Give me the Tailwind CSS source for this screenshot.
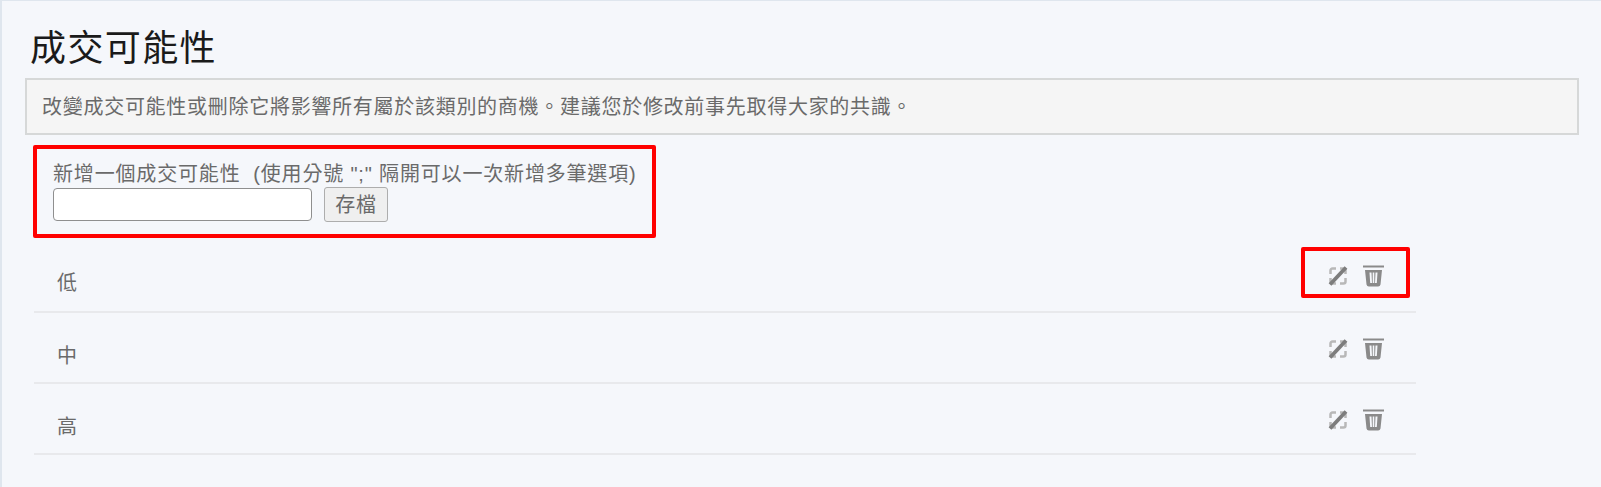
<!DOCTYPE html>
<html lang="zh-Hant">
<head>
  <meta charset="UTF-8">
  <script src="https://cdn.jsdelivr.net/npm/@tailwindcss/browser@4"></script>
  <title>成交可能性</title>
</head>
<body class="bg-[#f5f7fb] font-['Liberation_Sans','Noto_Sans_CJK_TC',sans-serif] text-[#6a6a6a]">
  <div class="h-[487px] overflow-hidden border-l-2 border-t border-[#dfe6ee] pl-[23px] pr-[22px]">
    <!-- title -->
    <h1 class="h-[77px] pt-[27px] pl-[5px] text-[36px] leading-[42px] tracking-[1.4px] text-[#1a1a1a]">成交可能性</h1>

    <!-- notice -->
    <div class="flex h-[57px] items-center border-2 border-[#d6d8d8] bg-[#f5f5f5] pl-[15px] text-[20px] tracking-[0.72px]">
      改變成交可能性或刪除它將影響所有屬於該類別的商機。建議您於修改前事先取得大家的共識。
    </div>

    <!-- add form -->
    <form class="mt-[10px] ml-[8px] h-[93px] w-[623px] rounded-[2px] border-[4px] border-[#ff0000] pt-[10px] pl-[16px]">
      <label class="block h-[28px] text-[20px] leading-[30px] tracking-[0.83px] whitespace-pre">新增一個成交可能性  (使用分號 ";" 隔開可以一次新增多筆選項)</label>
      <div class="flex items-center gap-[12px]">
        <input type="text" class="h-[33px] w-[259px] rounded-[4px] border border-[#8f8f8f] bg-white">
        <button type="button" class="h-[35px] w-[64px] rounded-[3px] border border-[#adadad] bg-[#efefef] text-[20px] tracking-[0.7px] text-[#6a6a6a]">存檔</button>
      </div>
    </form>

    <!-- list -->
    <div class="ml-[9px] w-[1382px]">
      <div class="relative flex h-[75px] items-start justify-between border-b-2 border-[#e8e9ec] pl-[23px] pt-[29px]">
        <span class="text-[20px] leading-[32px]">低</span>
        <div class="mr-[32px] mt-[-3px] flex items-center gap-[15px]">
          <svg class="h-[20px] w-[20px]" viewBox="0 0 20 20" fill="none">
            <path d="M8 2.500H4.500a2 2 0 0 0-2 2V8M2.500 12v3.500a2 2 0 0 0 2 2H8M12 17.500h3.500a2 2 0 0 0 2-2V12M17.500 8V4.500a2 2 0 0 0-2-2H12" stroke="#b8b8b8" stroke-width="2.500"/>
            <path d="M2 18.500L18 1.500" stroke="#7d7d7d" stroke-width="3.800"/>
          </svg>
          <svg class="h-[23px] w-[21px]" viewBox="0 0 21 23" fill="#8a8a8a">
            <path d="M0 1.500h21v2H0z"/>
            <path fill-rule="evenodd" d="M2 6h17l-1.500 14.500a2.500 2.500 0 0 1-2.500 2H6a2.500 2.500 0 0 1-2.500-2zM6.500 8.500l.7 10.500h1.800L8.500 8.500zM9.700 8.500V19h1.600V8.500zM12.500 8.500L12 19h1.800l.7-10.500z"/>
          </svg>
        </div>
        <!-- highlight on the actions -->
        <div class="absolute top-[9px] right-[6px] h-[51px] w-[109px] rounded-[2px] border-[4px] border-[#ff0000]"></div>
      </div>
      <div class="flex h-[71px] items-start justify-between border-b-2 border-[#e8e9ec] pl-[23px] pt-[27px]">
        <span class="text-[20px] leading-[32px]">中</span>
        <div class="mr-[32px] mt-[-3px] flex items-center gap-[15px]">
          <svg class="h-[20px] w-[20px]" viewBox="0 0 20 20" fill="none">
            <path d="M8 2.500H4.500a2 2 0 0 0-2 2V8M2.500 12v3.500a2 2 0 0 0 2 2H8M12 17.500h3.500a2 2 0 0 0 2-2V12M17.500 8V4.500a2 2 0 0 0-2-2H12" stroke="#b8b8b8" stroke-width="2.500"/>
            <path d="M2 18.500L18 1.500" stroke="#7d7d7d" stroke-width="3.800"/>
          </svg>
          <svg class="h-[23px] w-[21px]" viewBox="0 0 21 23" fill="#8a8a8a">
            <path d="M0 1.500h21v2H0z"/>
            <path fill-rule="evenodd" d="M2 6h17l-1.500 14.500a2.500 2.500 0 0 1-2.500 2H6a2.500 2.500 0 0 1-2.500-2zM6.500 8.500l.7 10.500h1.800L8.500 8.500zM9.700 8.500V19h1.600V8.500zM12.500 8.500L12 19h1.800l.7-10.500z"/>
          </svg>
        </div>
      </div>
      <div class="flex h-[71px] items-start justify-between border-b-2 border-[#e8e9ec] pl-[23px] pt-[27px]">
        <span class="text-[20px] leading-[32px]">高</span>
        <div class="mr-[32px] mt-[-3px] flex items-center gap-[15px]">
          <svg class="h-[20px] w-[20px]" viewBox="0 0 20 20" fill="none">
            <path d="M8 2.500H4.500a2 2 0 0 0-2 2V8M2.500 12v3.500a2 2 0 0 0 2 2H8M12 17.500h3.500a2 2 0 0 0 2-2V12M17.500 8V4.500a2 2 0 0 0-2-2H12" stroke="#b8b8b8" stroke-width="2.500"/>
            <path d="M2 18.500L18 1.500" stroke="#7d7d7d" stroke-width="3.800"/>
          </svg>
          <svg class="h-[23px] w-[21px]" viewBox="0 0 21 23" fill="#8a8a8a">
            <path d="M0 1.500h21v2H0z"/>
            <path fill-rule="evenodd" d="M2 6h17l-1.500 14.500a2.500 2.500 0 0 1-2.500 2H6a2.500 2.500 0 0 1-2.500-2zM6.500 8.500l.7 10.500h1.800L8.500 8.500zM9.700 8.500V19h1.600V8.500zM12.500 8.500L12 19h1.800l.7-10.500z"/>
          </svg>
        </div>
      </div>
    </div>
  </div>
</body>
</html>
